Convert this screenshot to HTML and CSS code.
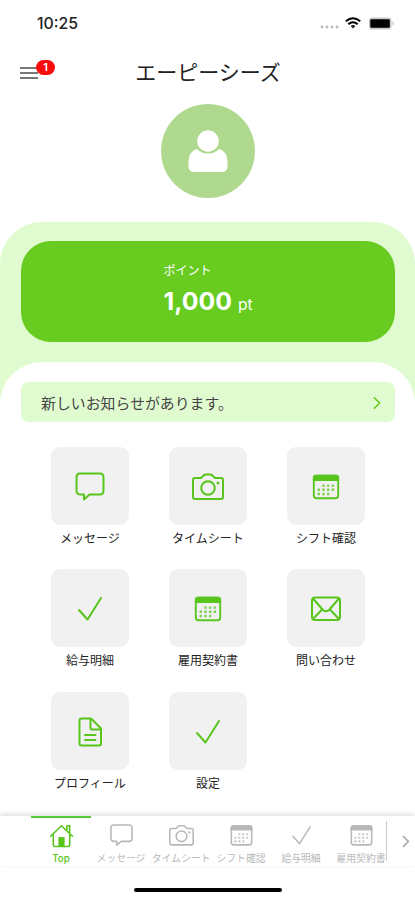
FILE: index.html
```html
<!DOCTYPE html>
<html lang="ja">
  <head>
    <meta charset="UTF-8" />
    <meta name="viewport" content="width=device-width, initial-scale=1.0" />
    <title>エーピーシーズ</title>
    <link rel="stylesheet" href="styles.css">
  </head>
  <body>
    <svg class="sprite">
      <symbol id="message" viewBox="0 0 32 32">
        <path d="M6 2.500h20q3.500 0 3.500 4v13q0 4-3.500 4H15.500l-5.500 5v-5H6q-3.500-.5-3.500-4v-13q0-4 3.500-4z" />
      </symbol>
      <symbol id="camera" viewBox="0 0 32 32">
        <path d="M3 7h6l2.500-2.500q1-1 2.500-1h4q1.500 0 2.500 1L23 7h6q2 0 2 2v17q0 2-2 2H3q-2 0-2-2V9q0-2 2-2z" />
        <circle cx="16" cy="17" r="6.800" />
        <circle class="solid" cx="26" cy="12" r="1.500" />
      </symbol>
      <symbol id="calendar" viewBox="0 0 32 32">
        <rect x="3" y="4" width="26" height="24" rx="3" />
        <path class="solid" d="M2 9.500V6q0-3 3-3h22q3 0 3 3v3.500z" />
        <path class="dots" d="M12 14.500h13M7 19h18M7 23.500h13" />
      </symbol>
      <symbol id="check" viewBox="0 0 32 32">
        <path d="M5 17l8.500 9.500L27 5" />
      </symbol>
      <symbol id="mail" viewBox="0 0 32 32">
        <rect x="2" y="4.500" width="28" height="22.500" rx="3" />
        <path d="M3 5.500L13 17q3 2.500 6 0L29 5.500M3 26L12 16.500M29 26L20 16.500" />
      </symbol>
      <symbol id="document" viewBox="0 0 32 32">
        <path d="M7.500 2.500H17L27 12.500v15q0 2-2 2H7.500q-2 0-2-2v-23q0-2 2-2zM16.500 2.500v9.500q0 1.500 1.500 1.500h9M11 19h10.500M11 24h10.500" />
      </symbol>
      <symbol id="home" viewBox="0 0 32 32">
        <path d="M2 17L16 3.500L30 17M5.500 15.500V28q0 2 2 2h17q2 0 2-2V15.500M23 9V3.500h3.500v9" />
        <path class="solid" d="M12 30V18h8v12z" />
      </symbol>
      <symbol id="arrow" viewBox="0 0 10 16">
        <path d="M2 2l6 6-6 6" />
      </symbol>
    </svg>

    <div class="app">
      <div class="status">
        <span class="time">10:25</span>
        <div class="signal">
          <svg class="cell" viewBox="0 0 19 4">
            <circle cx="2" cy="2" r="1.400" />
            <circle cx="7" cy="2" r="1.400" />
            <circle cx="12" cy="2" r="1.400" />
            <circle cx="17" cy="2" r="1.400" />
          </svg>
          <svg class="wifi" viewBox="0 0 16 12">
            <path d="M.8 4.300q7.200-6.200 14.400 0M3.300 7.200q4.700-4 9.400 0" />
            <path class="solid" d="M5.600 9q2.400-2 4.800 0L8 11.500z" />
          </svg>
          <svg class="battery" viewBox="0 0 26 13">
            <rect class="case" x=".5" y=".5" width="22.500" height="12" rx="3" />
            <rect x="1.800" y="2.300" width="19.500" height="8.400" rx="1.300" />
            <path class="case" d="M24 4q3 2.500 0 5z" />
          </svg>
        </div>
      </div>

      <header class="header">
        <button class="menu">
          <span></span>
          <span></span>
          <span></span>
          <b class="badge">1</b>
        </button>
        <h1>エーピーシーズ</h1>
      </header>

      <div class="avatar">
        <svg viewBox="0 0 40 44">
          <path d="M8.500 20Q20 29 31.500 20q8 3 8 13v4q0 6-6 6h-27q-6 0-6-6v-4q0-10 8-13z" />
          <circle class="head" cx="20" cy="12" r="11.500" />
        </svg>
      </div>

      <section class="points">
        <div class="card">
          <div class="balance">
            <p>ポイント</p>
            <div><strong>1,000</strong><span>pt</span></div>
          </div>
        </div>
      </section>

      <main class="sheet">
        <a class="notice">
          <span>新しいお知らせがあります。</span>
          <svg class="icon"><use href="#arrow" /></svg>
        </a>

        <div class="grid">
          <a class="item"><div class="tile"><svg class="icon"><use href="#message" /></svg></div>メッセージ</a>
          <a class="item"><div class="tile"><svg class="icon"><use href="#camera" /></svg></div>タイムシート</a>
          <a class="item"><div class="tile"><svg class="icon small"><use href="#calendar" /></svg></div>シフト確認</a>
          <a class="item"><div class="tile"><svg class="icon"><use href="#check" /></svg></div>給与明細</a>
          <a class="item"><div class="tile"><svg class="icon small"><use href="#calendar" /></svg></div>雇用契約書</a>
          <a class="item"><div class="tile"><svg class="icon"><use href="#mail" /></svg></div>問い合わせ</a>
          <a class="item"><div class="tile"><svg class="icon"><use href="#document" /></svg></div>プロフィール</a>
          <a class="item"><div class="tile"><svg class="icon"><use href="#check" /></svg></div>設定</a>
        </div>
      </main>

      <nav class="tabs">
        <div class="tab_list">
          <a class="tab active"><svg class="icon"><use href="#home" /></svg>Top</a>
          <a class="tab"><svg class="icon"><use href="#message" /></svg>メッセージ</a>
          <a class="tab"><svg class="icon"><use href="#camera" /></svg>タイムシート</a>
          <a class="tab"><svg class="icon"><use href="#calendar" /></svg>シフト確認</a>
          <a class="tab"><svg class="icon"><use href="#check" /></svg>給与明細</a>
          <a class="tab"><svg class="icon"><use href="#calendar" /></svg>雇用契約書</a>
        </div>
        <div class="next"><svg class="icon"><use href="#arrow" /></svg></div>
      </nav>
      <div class="home_bar"></div>
    </div>
  </body>
</html>
```

FILE: styles.css
```css
* {
  margin: 0;
  padding: 0;
  box-sizing: border-box;
}

body {
  font-family: Inter, "Noto Sans CJK JP", sans-serif;
  background: white;
  color: #222;
}

.sprite {
  display: none;
}

.icon {
  width: 32px;
  height: 32px;
  fill: none;
  stroke: currentColor;
  stroke-width: 2;
  stroke-linecap: round;
  stroke-linejoin: round;
}

.solid {
  fill: currentColor;
  stroke: none;
}

.dots {
  stroke-width: 2.6;
  stroke-linecap: butt;
  stroke-dasharray: 2.6 2.4;
  opacity: 0.75;
}

.app {
  display: flex;
  flex-direction: column;
  height: 900px;
  overflow: hidden;
}

.status {
  display: flex;
  justify-content: space-between;
  align-items: center;
  height: 46px;
  padding: 0 20px 0 37px;

  .time {
    font-size: 15.8px;
    font-weight: 500;
  }

  .signal {
    display: flex;
    align-items: center;
  }

  .cell {
    width: 19px;
    height: 4px;
    margin: 8px 6px 0 0;
    fill: #bbb;
  }

  .wifi {
    width: 16px;
    height: 12px;
    margin-right: 7px;
    fill: none;
    stroke: black;
    stroke-width: 2;
  }

  .battery {
    width: 27px;
    height: 13px;
  }

  .case {
    fill: #c8c8c8;
  }
}

.header {
  display: grid;
  grid-template-columns: 60px 1fr 60px;
  align-items: center;
  height: 54px;

  h1 {
    font-size: 21px;
    font-weight: 400;
    line-height: 30px;
    text-align: center;
    text-indent: 1px;
    white-space: nowrap;
  }
}

.menu {
  position: relative;
  display: grid;
  gap: 3px;
  width: 18px;
  margin-left: 20px;
  border: none;
  background: none;

  span {
    height: 2px;
    background: #777;
  }

  .badge {
    position: absolute;
    left: 16px;
    top: -7px;
    width: 19px;
    height: 15px;
    border-radius: 8px;
    background: #f80d0d;
    color: white;
    font: 600 11px/15px Inter, sans-serif;
  }
}

.avatar {
  display: grid;
  place-items: center;
  width: 94px;
  height: 94px;
  margin: 4px auto 24px 161px;
  border-radius: 50%;
  background: #afd98f;

  svg {
    width: 40px;
    height: 44px;
    fill: white;
  }

  .head {
    stroke: #afd98f;
    stroke-width: 1.5;
  }
}

.points {
  flex: none;
  height: 200px;
  padding: 19px 20px 0 21px;
  border-radius: 42px 42px 0 0;
  background: #e1fbd0;

  .card {
    display: flex;
    justify-content: center;
    height: 101px;
    padding-top: 21px;
    border-radius: 30px;
    background: #67cb20;
    color: white;
  }

  p {
    font-size: 12px;
    line-height: 18px;
  }

  .balance > div {
    display: flex;
    align-items: baseline;
    gap: 6px;
    line-height: 30px;
    margin-top: 6px;
  }

  strong {
    font-size: 24.8px;
    font-weight: 700;
  }

  span {
    font-size: 15.5px;
    font-weight: 400;
  }
}

.sheet {
  flex: none;
  height: 454px;
  margin-top: -60px;
  padding: 20px 20px 0 21px;
  border-radius: 42px 42px 0 0;
  background: white;
}

.notice {
  display: flex;
  justify-content: space-between;
  align-items: center;
  height: 40px;
  padding: 0 13px 0 20px;
  border-radius: 8px;
  background: #e1fbd0;
  color: #444;
  font-size: 14.9px;

  .icon {
    width: 10px;
    height: 14px;
    margin-top: 2px;
    color: #67cb20;
  }
}

.grid {
  display: grid;
  grid-template-columns: repeat(3, 78px);
  grid-auto-rows: 102px;
  gap: 20.4px 40px;
  margin: 25px 0 0 30px;
}

.item {
  display: flex;
  flex-direction: column;
  align-items: center;
  gap: 5px;
  font-size: 12px;
  line-height: 17px;
  white-space: nowrap;

  .tile {
    display: grid;
    place-items: center;
    width: 78px;
    height: 78px;
    padding-top: 2px;
    border-radius: 9px;
    background: #f1f1f1;
    color: #58c51c;
  }

  .small {
    width: 30px;
    height: 30px;
  }
}

.tabs {
  display: flex;
  flex: none;
  height: 50px;
  box-shadow: 0 -2px 5px rgba(0, 0, 0, 0.13);

  .tab_list {
    display: flex;
    width: 386px;
    padding-left: 31px;
    overflow: hidden;
  }

  .tab {
    display: flex;
    flex: none;
    flex-direction: column;
    align-items: center;
    width: 60px;
    padding-top: 5px;
    border-top: 2px solid transparent;
    color: #b8b8b8;
    font-size: 9.8px;
    line-height: 14px;
    white-space: nowrap;
  }

  .tab .icon {
    width: 25px;
    height: 25px;
    margin-bottom: 4px;
    flex: none;
  }

  .active {
    border-color: #58c83b;
    color: #58c51c;
    font-weight: 500;
  }

  .next {
    display: grid;
    place-items: center;
    width: 29px;
    height: 40px;
    margin-top: 5px;
    padding-left: 9px;
    border-left: 1px solid #ccc;
    color: #aaa;
  }

  .next .icon {
    width: 10px;
    height: 13px;
  }
}

.home_bar {
  flex: none;
  width: 148px;
  height: 4px;
  margin: 22px 0 0 134px;
  border-radius: 2px;
  background: black;
}
```
